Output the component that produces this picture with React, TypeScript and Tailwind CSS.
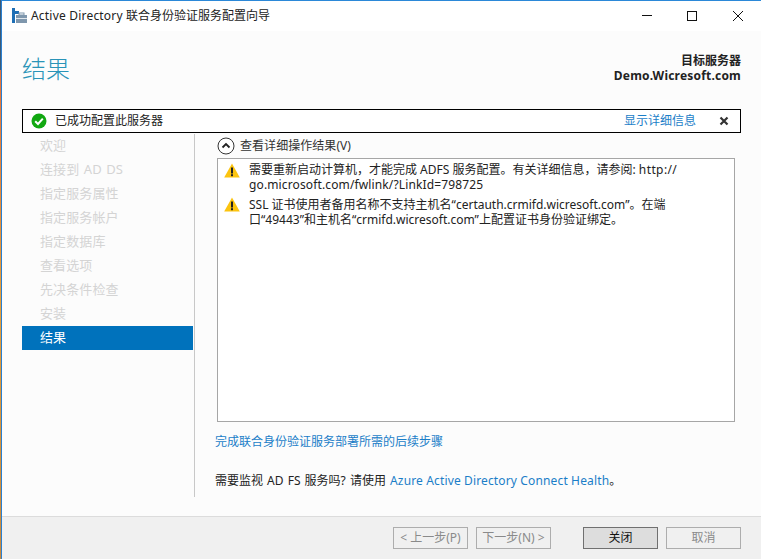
const font = { fontFamily: '"Noto Sans", "Noto Sans CJK SC", sans-serif' };

function Warn() {
  return (
    <svg width="16" height="15" viewBox="0 0 16 15" className="shrink-0">
      <path d="M8 0.5 L15.8 14.5 L0.2 14.5 Z" fill="#fcc40f" />
      <rect x="7" y="4.5" width="2" height="6" fill="#222" />
      <rect x="7" y="11.2" width="2" height="2" fill="#222" />
    </svg>
  );
}

function Btn({ children, kind }: { children: React.ReactNode; kind: "off" | "on" }) {
  return (
    <div
      className={
        kind === "on"
          ? "w-[75px] h-[22px] flex items-center justify-center border border-[#707070] bg-[#dddddd] text-[#111] text-[12px]"
          : "w-[75px] h-[22px] flex items-center justify-center border border-[#adadad] bg-[#f0f0f0] text-[#8a8a8a] text-[12px]"
      }
    >
      {children}
    </div>
  );
}

const nav = ["欢迎", "连接到 AD DS", "指定服务属性", "指定服务帐户", "指定数据库", "查看选项", "先决条件检查", "安装"];

export default function App() {
  return (
    <div className="w-[761px] h-[559px] flex overflow-hidden bg-white" style={font}>
      <div className="w-px h-full shrink-0 bg-[linear-gradient(to_bottom,#3a5a78_0,#3a5a78_70px,#e8743b_70px,#e8a03b_300px,#c98a40_100%)]" />
      <div className="w-px h-full shrink-0 bg-[#2b80d0]" />
      <div className="flex-1 min-w-0 flex flex-col">
        <div className="h-px bg-[#2b88d8] shrink-0" />
        {/* Title bar */}
        <div className="h-[30px] bg-white flex items-center shrink-0">
          <svg width="16" height="16" viewBox="0 0 16 16" className="ml-[9px] shrink-0">
            <rect x="1" y="0" width="3" height="6" fill="#1f6fb5" />
            <rect x="4" y="3" width="4" height="3" fill="#1f6fb5" />
            <rect x="1" y="6" width="3" height="9" fill="#1f6fb5" />
            <rect x="5" y="7" width="11" height="8" fill="#7f97ad" />
            <rect x="8" y="5" width="5" height="2" fill="none" stroke="#7f97ad" />
            <rect x="5" y="10" width="11" height="1" fill="#dfe6ec" />
          </svg>
          <span className="ml-[4px] text-[12px] text-[#222] whitespace-nowrap"><span className="tracking-[0.2px]">Active Directory</span> 联合身份验证服务配置向导</span>
          <div className="ml-auto flex items-center">
            <svg width="46" height="30" viewBox="0 0 46 30"><rect x="20" y="14" width="10" height="1" fill="#111" /></svg>
            <svg width="46" height="30" viewBox="0 0 46 30"><rect x="19.5" y="10.5" width="9" height="9" fill="none" stroke="#111" /></svg>
            <svg width="46" height="30" viewBox="0 0 46 30" className="mr-[1px]"><path d="M19 10 L29 20 M29 10 L19 20" stroke="#111" strokeWidth="1" /></svg>
          </div>
        </div>
        {/* Body */}
        <div className="flex-1 bg-[#fcfcfc] flex flex-col min-h-0">
          <div className="h-[78px] shrink-0 flex justify-between pl-[20px] pr-[20px]">
            <div className="mt-[19px] text-[24px] leading-[38px] font-light text-[#2a94b8]">结果</div>
            <div className="mt-[22px] text-right text-[12px] leading-[15px] font-bold text-[#222]">
              <div>目标服务器</div>
              <div className="tracking-[0.2px]">Demo.Wicresoft.com</div>
            </div>
          </div>
          {/* Status */}
          <div className="h-[24px] ml-[20px] mr-[20px] shrink-0 border border-black bg-white flex items-center text-[12px]">
            <svg width="16" height="16" viewBox="0 0 16 16" className="ml-[8px] shrink-0">
              <circle cx="8" cy="8" r="7.5" fill="#12a812" />
              <path d="M4.2 8.2 L7 11 L11.8 5.6" stroke="#fff" strokeWidth="2" fill="none" />
            </svg>
            <span className="ml-[8px] text-[#222]">已成功配置此服务器</span>
            <span className="ml-auto text-[#1b7ec8]">显示详细信息</span>
            <svg width="10" height="10" viewBox="0 0 10 10" className="ml-[23px] mr-[11px] shrink-0">
              <path d="M1.5 1.5 L8.5 8.5 M8.5 1.5 L1.5 8.5" stroke="#333" strokeWidth="2.2" />
            </svg>
          </div>
          {/* Main */}
          <div className="h-[363px] shrink-0 ml-[20px] mt-px flex">
            <div className="w-[171px] shrink-0 text-[13px]">
              {nav.map((n) => (
                <div key={n} className="h-[24px] pl-[18px] flex items-center text-[#d4d4d4] [word-spacing:1px] tracking-[0.1px]">{n}</div>
              ))}
              <div className="h-[24px] pl-[18px] flex items-center bg-[#0072bc] text-white">结果</div>
            </div>
            <div className="w-px ml-px bg-[#c8c8c8] shrink-0" />
            <div className="flex-1 min-w-0 pl-[20px] flex flex-col">
              <div className="h-[24px] flex items-center ml-[2px] text-[12px] text-[#333]">
                <svg width="18" height="18" viewBox="0 0 18 18" className="shrink-0 -mt-[1px]">
                  <circle cx="9" cy="9" r="8" fill="#fff" stroke="#333" />
                  <path d="M5.5 10.5 L9 7 L12.5 10.5" stroke="#222" strokeWidth="1.8" fill="none" />
                </svg>
                <span className="ml-[5px] tracking-[0.05px]">查看详细操作结果(V)</span>
              </div>
              <div className="ml-[2px] w-[518px] h-[264px] border border-[#a6a6a6] bg-white pl-[6px] pt-[3px] text-[12px] leading-[15px] text-[#222]">
                <div className="flex">
                  <div className="pt-[1px]"><Warn /></div>
                  <div className="ml-[9px] w-[470px]">需要重新启动计算机，才能完成 ADFS 服务配置。有关详细信息，请参阅: <span className="tracking-[0.4px]">http://</span><br /><span className="tracking-[0.13px]">go.microsoft.com/fwlink/?LinkId=798725</span></div>
                </div>
                <div className="flex mt-[5px]">
                  <div><Warn /></div>
                  <div className="ml-[9px] w-[470px]">SSL 证书使用者备用名称不支持主机名“certauth.crmifd.wicresoft.com”。在端<br />口“49443”和主机名“crmifd.wicresoft.com”上配置证书身份验证绑定。</div>
                </div>
              </div>
              <div className="mt-[12px] text-[12px] leading-[16px] text-[#1b7ec8]">完成联合身份验证服务部署所需的后续步骤</div>
              <div className="mt-[23px] text-[12px] leading-[16px] text-[#222]"><span className="[word-spacing:1px]">需要监视 AD FS 服务吗? 请使用 </span><span className="text-[#1b7ec8] tracking-[0.14px]">Azure Active Directory Connect Health</span>。</div>
            </div>
          </div>
          <div className="flex-1" />
          {/* Footer */}
          <div className="h-[43px] shrink-0 border-t border-[#dcdcdc] bg-[#f0f0f0] flex items-center pr-[20px] pb-px">
            <div className="ml-auto flex items-center">
              <Btn kind="off">&lt; 上一步(P)</Btn>
              <div className="w-[8px]" />
              <Btn kind="off">下一步(N) &gt;</Btn>
              <div className="w-[32px]" />
              <Btn kind="on">关闭</Btn>
              <div className="w-[8px]" />
              <Btn kind="off">取消</Btn>
            </div>
          </div>
        </div>
      </div>
    </div>
  );
}
